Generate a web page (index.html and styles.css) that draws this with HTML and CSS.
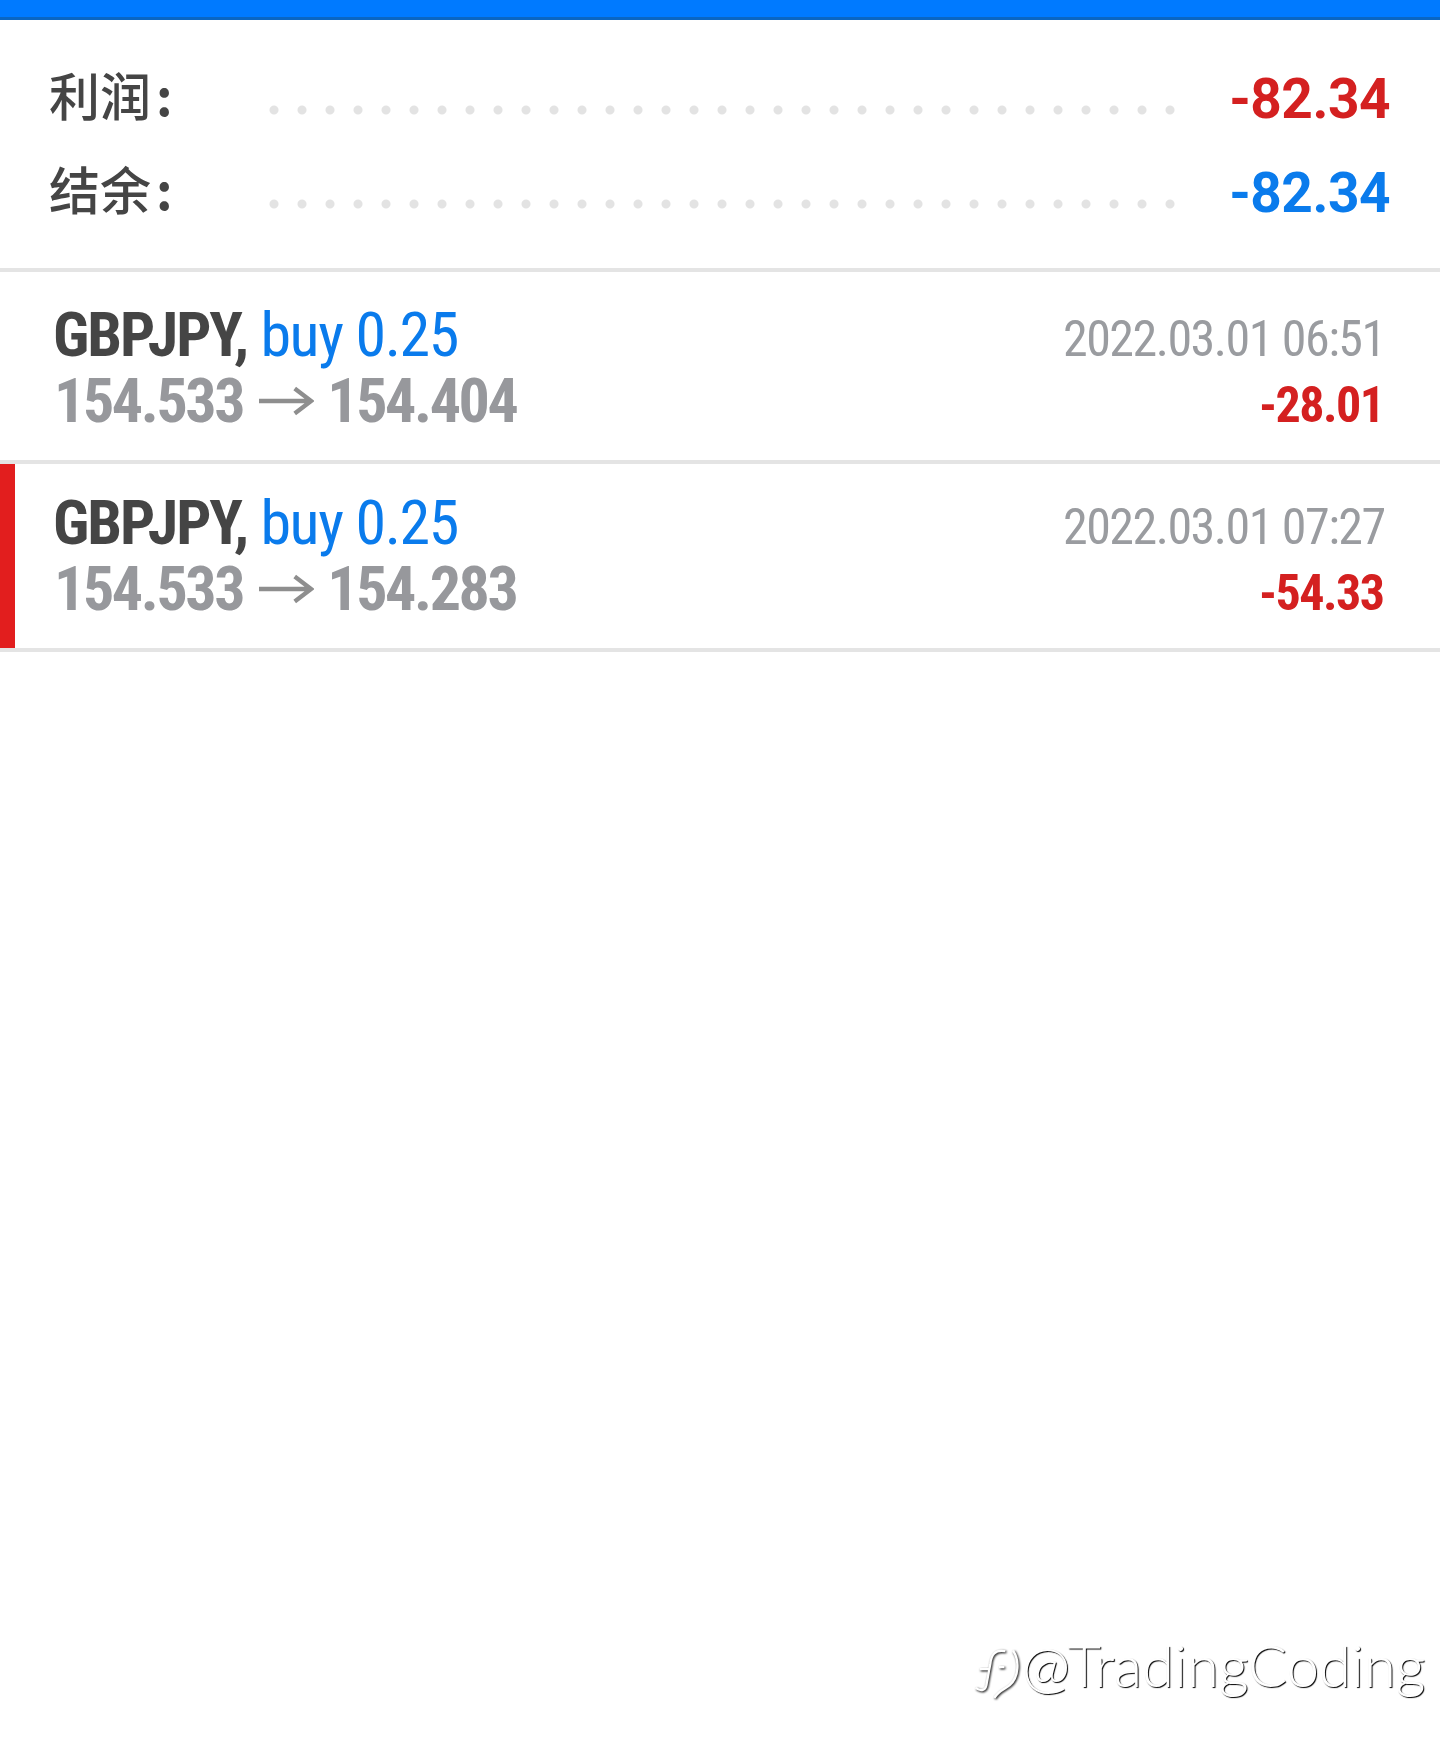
FILE: index.html
```html
<!DOCTYPE html>
<html lang="zh-CN">
<head>
  <meta charset="UTF-8">
  <title>历史</title>
  <link rel="stylesheet" href="styles.css">
</head>
<body>

  <div class="topbar"></div>

  <div class="summary">
    <div class="line">
      <span class="label">利润<span class="colon">:</span></span>
      <span class="dots"></span>
      <span class="total red">-82.34</span>
    </div>
    <div class="line">
      <span class="label">结余<span class="colon">:</span></span>
      <span class="dots"></span>
      <span class="total blue">-82.34</span>
    </div>
  </div>

  <div class="deal">
    <div class="left">
      <div class="title"><b>GBPJPY,</b> <span class="blue">buy 0.25</span></div>
      <div class="prices">
        <span>154.533</span>
        <svg class="arrow" viewBox="0 0 57 30"><path d="M0 15H54M37 2L54 15L37 28"/></svg>
        <span>154.404</span>
      </div>
    </div>
    <div class="right">
      <div class="date">2022.03.01 06:51</div>
      <div class="profit red">-28.01</div>
    </div>
  </div>

  <div class="deal selected">
    <div class="left">
      <div class="title"><b>GBPJPY,</b> <span class="blue">buy 0.25</span></div>
      <div class="prices">
        <span>154.533</span>
        <svg class="arrow" viewBox="0 0 57 30"><path d="M0 15H54M37 2L54 15L37 28"/></svg>
        <span>154.283</span>
      </div>
    </div>
    <div class="right">
      <div class="date">2022.03.01 07:27</div>
      <div class="profit red">-54.33</div>
    </div>
  </div>

  <div class="watermark">
    <svg class="wm-logo" viewBox="40 80 150 170"><path d="M137 98C105 92 95 110 92 135L80 200C76 218 62 218 48 208M60 152H90M118 146H134M160 96C180 125 178 175 150 200C135 212 118 215 104 238"/></svg>
    <span>@TradingCoding</span>
  </div>

</body>
</html>
```

FILE: styles.css
```css
body {
  margin: 0;
  height: 1746px;
  overflow: hidden;
  background: #fff;
  font-family: Roboto, "Noto Sans CJK SC", sans-serif;
  font-stretch: 75%;
  position: relative;
}

.topbar {
  height: 17px;
  background: #007aff;
  border-bottom: 3px solid #0a66c2;
}

.red {
  color: #d42020;
}

.blue {
  color: #0a7bec;
}

.summary {
  height: 252px;
  padding: 45px 50px 0 50px;
  box-sizing: border-box;
  border-bottom: 4px solid #e4e4e4;
}

.line {
  display: flex;
  height: 94px;
}

.label {
  width: 211px;
  flex: none;
  margin-top: -1px;
  margin-left: -1px;
  font-family: "Noto Sans CJK SC", sans-serif;
  font-size: 51px;
  font-weight: 500;
  line-height: 60px;
  color: #454545;
}

.colon {
  margin-left: 5px;
  font-weight: 700;
}

.dots {
  width: 924px;
  height: 10px;
  margin-top: 40px;
  flex: none;
  background: radial-gradient(circle at center, #e3e3e3 4px, transparent 5px) 0 0 / 28px 10px repeat-x;
}

.total {
  margin-left: auto;
  margin-top: 4px;
  font-size: 55px;
  font-stretch: 100%;
  font-weight: 700;
  letter-spacing: -0.5px;
  line-height: 60px;
}

.deal {
  display: flex;
  justify-content: space-between;
  height: 192px;
  box-sizing: border-box;
  padding: 30px 55px 0 53px;
  border-bottom: 4px solid #e4e4e4;
}

.deal.selected {
  box-shadow: inset 15px 0 0 #e21e1e;
  height: 188px;
  padding-top: 26px;
}

.title {
  font-size: 62px;
  letter-spacing: -2px;
  line-height: 66px;
  color: #454545;
  white-space: nowrap;
}

.title b {
  font-weight: 700;
  margin-right: 1px;
}

.title .blue {
  letter-spacing: -1.4px;
}

.prices {
  display: flex;
  align-items: center;
  padding-left: 1px;
  font-size: 62px;
  font-weight: 700;
  letter-spacing: -2.4px;
  line-height: 66px;
  color: #97989c;
}

.arrow {
  width: 55px;
  height: 30px;
  margin: 0 13px 0 16px;
  fill: none;
  stroke: #8e8e8e;
  stroke-width: 4.5;
}

.right {
  width: 322px;
  padding-top: 4px;
}

.date {
  font-size: 50px;
  letter-spacing: -1.5px;
  line-height: 66px;
  color: #9a9ca0;
  white-space: nowrap;
}

.profit {
  padding-left: 196px;
  font-size: 50px;
  font-weight: 700;
  letter-spacing: -1.5px;
  line-height: 66px;
}

.watermark {
  position: absolute;
  left: 973px;
  top: 1632px;
  display: flex;
  align-items: flex-start;
  font-family: Lato, sans-serif;
  font-weight: 300;
  font-size: 58px;
  line-height: 66px;
  color: #fff;
  text-shadow: 1px 1px 1px #000;
  white-space: nowrap;
}

.wm-logo {
  width: 50px;
  height: 57px;
  margin-top: 13px;
  margin-right: -1px;
  fill: none;
  stroke: #fff;
  stroke-width: 7;
  filter: drop-shadow(1.5px 1.5px 1px #000);
}
```
